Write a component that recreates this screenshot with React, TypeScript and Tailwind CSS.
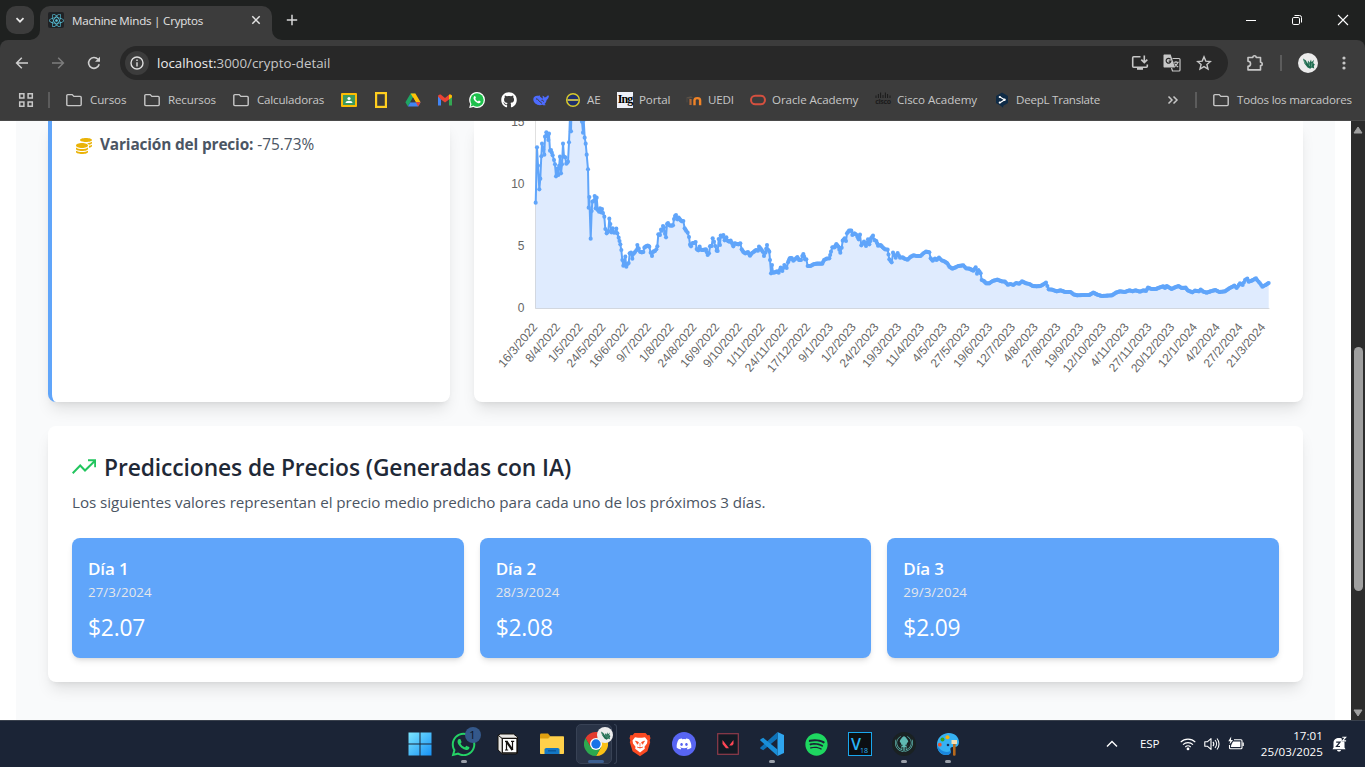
import React from "react";
import { FaCoins, FaWhatsapp, FaGithub, FaDiscord, FaSpotify, FaReact } from "react-icons/fa";
import { SiGitkraken } from "react-icons/si";

/* ---------- price history ---------- */

const SEGMENTS: { ox: number; oy: number; pts: string }[] = [
  {
    ox: 500,
    oy: 120,
    pts: "107,248 111,82 114,137 118,208 121,176 124,109 126,71 133,104 135,50 139,37 145,60 147,41 150,92 153,90 158,106 162,120 165,133 168,169 172,146 175,165 180,110 183,160 186,133 189,71 192,110 196,112 199,131 204,125 207,67 210,-10 213,34 215,-60 240,-60 243,-10 246,5 249,38 251,0 254,53 257,71 260,104 264,148 266,263 268,231 272,356 275,273 277,245 281,243 284,228 287,265 290,233 293,270 297,275 300,265 303,277 306,267 309,279 313,290 316,327 320,340 325,333 328,296 331,312 334,337 338,325 342,338 346,337 349,326 352,340 356,353 361,373 364,390 367,420 370,437 373,430 376,410 379,440 383,432 386,429 389,400 393,398 397,416 400,402 405,396 409,391 412,375 416,385 420,395 425,397 430,396 433,383 438,379 443,377 448,380 452,398 456,408 460,395 465,393 469,388 472,379 475,343 480,345 483,329 486,332 489,318 492,322 495,341 498,352 501,312 504,309 508,316 514,317 519,316 522,297 525,288 528,285 532,298 536,293 541,300 546,304 550,303 554,325 559,333 563,338 567,351 570,374 573,379 577,370 582,369 587,366 590,387 595,391 599,380 603,389 608,390 614,389 618,388 623,405 627,400 630,379 635,378 638,355 642,365 646,378 650,392 653,393 656,357 660,375 662,347 666,350 670,345 674,361 679,352 683,362 688,365 692,362 697,372 700,379 704,370 710,372 716,373 721,370 725,388 730,396 736,400 744,396 749,405",
  },
  {
    ox: 750,
    oy: 210,
    pts: "0,137 5,130 12,125 18,120 24,122 27,110 33,117 38,125 42,138 46,128 51,105 55,120 58,125 60,150 63,190 66,165 69,188 75,187 81,184 86,188 92,173 97,183 103,165 110,174 114,157 119,145 125,144 130,152 136,147 142,141 147,150 153,150 157,138 160,132 165,148 169,148 173,168 182,168 190,163 200,161 210,161 217,161 222,150 230,146 238,145 243,125 247,112 254,112 259,102 265,110 271,128 275,113 278,92 284,85 288,93 291,70 297,62 304,62 307,75 313,70 320,75 326,88 330,74 334,106 342,95 348,108 354,88 358,103 363,85 369,77 373,90 379,93 384,107 392,105 398,112 405,118 413,119 418,148 425,157 429,128 437,143 443,129 450,143 458,142 465,147 473,149 480,142 490,136 500,138 512,138 520,130 528,125 538,127 542,145 548,152 555,146 560,150 567,143 575,151 583,154 592,160 598,170 607,176 615,173 625,168 640,166 648,175 658,176 670,182 677,172 681,191 685,180 692,190 695,210 702,213 708,220 718,220 728,213 742,209 755,214 765,215 773,224 782,222 790,225 798,219 808,221",
  },
  {
    ox: 1010,
    oy: 230,
    pts: "36,154 48,160 58,162 68,168 80,169 92,168 100,163 108,158 112,168 116,178 126,179 140,184 152,181 165,186 182,186 190,193 202,196 220,195 238,195 250,188 262,194 275,198 290,197 306,196 318,188 330,184 345,186 358,181 368,184 376,181 390,185 400,181 408,183 414,173 424,177 438,177 450,172 460,169 465,174 470,168 485,177 495,172 505,168 515,174 527,173 533,181 547,187 555,182 567,184 572,179 580,185 590,188 602,184 616,180 628,186 645,184 658,175 673,167 680,174 690,160 698,165 705,150 712,146 716,155 725,152 738,145 742,151 750,160 757,170 767,165 776,159",
  },
];

const CHART_X = 474;
const CHART_Y = 121;

const keyPoints: [number, number][] = SEGMENTS.flatMap((s) =>
  s.pts.split(" ").map((p): [number, number] => {
    const [x, y] = p.split(",").map(Number);
    return [s.ox + x / 3 - CHART_X, s.oy + y / 3 - CHART_Y];
  }),
);

const markers: [number, number][] = [];
keyPoints.forEach((p, i) => {
  markers.push(p);
  const n = keyPoints[i + 1];
  if (!n) return;
  const steps = Math.round((n[0] - p[0]) / 1.1);
  for (let k = 1; k < steps; k++) {
    const t = k / steps;
    markers.push([p[0] + (n[0] - p[0]) * t, p[1] + (n[1] - p[1]) * t]);
  }
});

const linePath = keyPoints.map((p, i) => `${i ? "L" : "M"}${p[0].toFixed(1)} ${p[1].toFixed(1)}`).join("");
const last = keyPoints[keyPoints.length - 1];
const areaPath = `${linePath}L${last[0].toFixed(1)} 187.5L61.5 187.5Z`;

const DATES =
  "16/3/2022 8/4/2022 1/5/2022 24/5/2022 16/6/2022 9/7/2022 1/8/2022 24/8/2022 16/9/2022 9/10/2022 1/11/2022 24/11/2022 17/12/2022 9/1/2023 1/2/2023 24/2/2023 19/3/2023 11/4/2023 4/5/2023 27/5/2023 19/6/2023 12/7/2023 4/8/2023 27/8/2023 19/9/2023 12/10/2023 4/11/2023 27/11/2023 20/12/2023 12/1/2024 4/2/2024 27/2/2024 21/3/2024".split(
    " ",
  );

function PriceChart() {
  return (
    <svg width="829" height="281" viewBox="0 0 829 281" className="block overflow-hidden">
      <path d={areaPath} fill="#dfebfe" />
      <path d="M61.5 0V187.5H795.5" fill="none" stroke="#000" strokeOpacity="0.12" />
      <path d={linePath} fill="none" stroke="#60a5fa" strokeWidth="2" strokeLinejoin="round" />
      {markers.map(([x, y], i) => (
        <circle key={i} cx={x} cy={y} r="2.05" fill="#60a5fa" />
      ))}
      <g fontFamily="Liberation Sans, Arial, sans-serif" fontSize="12" fill="#666">
        {[15, 10, 5, 0].map((v, i) => (
          <text key={v} x="50.5" y={5 + i * 62} textAnchor="end">
            {v}
          </text>
        ))}
        {DATES.map((d, i) => (
          <text
            key={d}
            textAnchor="end"
            transform={`translate(${(64 + i * 22.75).toFixed(2)} 206.3) rotate(-50)`}
          >
            {d}
          </text>
        ))}
      </g>
    </svg>
  );
}

/* ---------- small icons ---------- */

type SvgProps = { size?: number; box?: string; className?: string; children: React.ReactNode };
function Svg({ size = 16, box = "0 0 16 16", className = "", children }: SvgProps) {
  return (
    <svg width={size} height={size} viewBox={box} className={`shrink-0 ${className}`} fill="none">
      {children}
    </svg>
  );
}

const Folder = () => (
  <Svg>
    <path d="M.8 3.600c0-.6.4-1 1-1h4.400l1.700 1.800h6.300c.6 0 1 .4 1 1v7.200c0 .6-.4 1-1 1H1.800c-.6 0-1-.4-1-1z" stroke="#c7c7c7" strokeWidth="1.400" />
  </Svg>
);

const Dragon = ({ size = 20 }: { size?: number }) => (
  <Svg size={size} box="0 0 20 20">
    <circle cx="10" cy="10" r="10" fill="#ececec" />
    <path d="M5 5.500l3 2 1.600 3.200.4-3.200 1.600 2.200L13 6.500l.6 2.800 2.400-2.500-.8 3.200 1.600 1.400-1 1.600.4 2.400-2.400-1-1.600 1.400-2.600-1.200-1.600-2.200-1.600-2z" fill="#1e6b4f" />
    <path d="M5.500 7l2 3.600M10.800 9.500l.8 3.500M14 10l-.6 3.600" stroke="#7fb39f" strokeWidth=".7" />
  </Svg>
);

const Drive = () => (
  <Svg>
    <path d="M5.600 1.400h4.800L5.200 10.400 2.900 14.400.4 10.200z" fill="#1fa463" />
    <path d="M5.600 1.400h4.800l5.200 8.900h-4.800z" fill="#ffc107" />
    <path d="M5.400 10.200h10.200l-2.500 4.300H2.900z" fill="#4285f4" />
    <path d="M10.800 10.200h4.800l-2.500 4.300z" fill="#ea4335" />
    <path d="M8 5.600l2.700 4.600H5.300z" fill="#3c3c3c" />
  </Svg>
);

const Gmail = () => (
  <Svg>
    <path d="M1 4v9.400h3V7.200z" fill="#4285f4" />
    <path d="M15 4v9.400h-3V7.200z" fill="#34a853" />
    <path d="M1 4.600C1 2.800 3 2 4.300 3L8 5.900 11.700 3C13 2 15 2.800 15 4.600L12 7.600 8 10.500 4 7.600z" fill="#ea4335" />
    <path d="M12 3v4.600l3-2.400v-.8C15 2.700 13.200 2 12 3z" fill="#fbbc04" />
  </Svg>
);

const WhatsBadge = () => (
  <Svg>
    <path d="M8 0a8 8 0 0 1 0 16 8 8 0 0 1-3.600-.9L.2 16l1-4A8 8 0 0 1 8 0z" fill="#fff" />
    <circle cx="8" cy="8" r="6.700" fill="#1ec04c" />
    <path d="M3 11l1.600 2.600-3 .8z" fill="#1ec04c" />
    <path d="M5.300 4.300c.6-.4 1-.2 1.200.4l.4 1.100c.1.400-.5.800-.6 1.100.6 1.200 1.500 2 2.700 2.500.4-.2.700-.8 1-.8l1.400.7c.5.300.1 1.400-.6 1.800-1.900.9-6.400-2.500-6.300-5.200 0-.7.400-1.300.8-1.600z" fill="#fff" />
  </Svg>
);

const Whale = () => (
  <Svg>
    <path d="M.3 7.300C.3 4.800 2.400 3.600 4.600 3.800c.8.100 1.400-.4 2.200-.3.500.1.300.6.100 1 .9.500 1.800 1.300 2.600 2.200.5-.8.300-1.700-.2-2.900 1.200.2 2 .8 2.300 1.700 1.200-.1 2.200-.8 2.700-2 .5.300 1 .3 1.700.1-.1 2.400-1.100 3.700-2.400 4.300-.2 1.800-.9 3.100-2.100 4.200l1.300 1c-1.300.4-2.500.2-3.400-.3C4.700 14.300.3 11.200.3 7.300z" fill="#4d6bfe" />
    <path d="M3 6.800c2.500 0 3.400 3.400 6 4.600M8.500 8.300c1-.4 1.900.2 2 1.300" stroke="#3c3c3c" strokeWidth="1" />
  </Svg>
);

const Chrome = () => (
  <Svg size={24} box="0 0 24 24">
    <path d="M12 6h10.400A12 12 0 0 1 12 24l5.200-9z" fill="#fbc116" />
    <path d="M12 24A12 12 0 0 1 1.600 6l5.200 9 5.200 3 5.200-3z" fill="#2da94f" />
    <path d="M1.600 6a12 12 0 0 1 20.800 0H12l-5.200 9z" fill="#e33b2e" />
    <circle cx="12" cy="12" r="6" fill="#fff" />
    <circle cx="12" cy="12" r="4.700" fill="#1a73e8" />
  </Svg>
);

/* ---------- browser chrome ---------- */

function TabStrip() {
  return (
    <div className="flex h-10 shrink-0 bg-[#1f2120] text-[#e3e3e3]">
      <div className="ml-1.5 mt-1.5 flex size-7 items-center justify-center rounded-[10px] bg-[#3c3c3c]">
        <Svg size={12} box="0 0 12 12">
          <path d="M2.500 4.200L6 7.700l3.500-3.500" stroke="#e8e8e8" strokeWidth="1.700" />
        </Svg>
      </div>
      <svg width="10" height="10" className="-ml-1 self-end" viewBox="0 0 10 10">
        <path d="M10 0v10H0A10 10 0 0 0 10 0z" fill="#3c3c3c" />
      </svg>
      <div className="mt-1.5 flex w-[232px] items-center rounded-t-[10px] bg-[#3c3c3c] pb-1.5 pl-2">
        <div className="flex size-4 items-center justify-center rounded-[2px] bg-[#202225]">
          <FaReact size={15} color="#58c4dc" />
        </div>
        <span className="ml-2 w-[176px] whitespace-nowrap pt-px text-[11.6px] leading-4 tracking-[-0.22px]">Machine Minds | Cryptos</span>
        <Svg size={12} box="0 0 12 12" className="ml-0.5">
          <path d="M2.300 2.300l7.400 7.400M9.700 2.300L2.300 9.700" stroke="#e3e3e3" strokeWidth="1.500" />
        </Svg>
      </div>
      <svg width="10" height="10" className="self-end" viewBox="0 0 10 10">
        <path d="M0 0v10h10A10 10 0 0 1 0 0z" fill="#3c3c3c" />
      </svg>
      <Svg size={12} box="0 0 12 12" className="ml-1 mt-3.5">
        <path d="M6 .8v10.400M.8 6h10.400" stroke="#d8d8d8" strokeWidth="1.500" />
      </Svg>
      <div className="ml-auto flex h-10 items-center">
        <div className="flex w-[46px] justify-center">
          <div className="mt-px h-px w-2.5 bg-white" />
        </div>
        <div className="flex w-[46px] justify-center">
          <Svg size={12} box="0 0 12 12">
            <rect x="1.500" y="3.500" width="7" height="7" rx="1.300" stroke="#fff" />
            <path d="M3.500 1.500h5a2 2 0 0 1 2 2v5" stroke="#fff" />
          </Svg>
        </div>
        <div className="flex w-[45px] justify-center">
          <Svg size={12} box="0 0 12 12">
            <path d="M1 1l10 10M11 1L1 11" stroke="#fff" strokeWidth="1.100" />
          </Svg>
        </div>
      </div>
    </div>
  );
}

function Toolbar() {
  return (
    <div className="bg-[#1f2120]">
      <div className="flex h-[46px] items-center rounded-t-lg bg-[#3c3c3c]">
        <Svg className="ml-3.5">
          <path d="M14 8H2.800M7.800 2.800L2.600 8l5.200 5.200" stroke="#cfcfcf" strokeWidth="1.500" />
        </Svg>
        <Svg className="ml-5">
          <path d="M2 8h11.200M8.200 2.800L13.400 8l-5.200 5.200" stroke="#7d7d7d" strokeWidth="1.500" />
        </Svg>
        <Svg className="ml-5">
          <path d="M13.200 9.300A5.400 5.400 0 1 1 12 4.300" stroke="#cfcfcf" strokeWidth="1.600" />
          <path d="M14 1.800v5H9z" fill="#cfcfcf" />
        </Svg>
        <div className="ml-[18px] flex h-[34px] w-[1108px] items-center rounded-full bg-[#282828] pl-[5px]">
          <div className="flex size-6 items-center justify-center rounded-full bg-[#3c3c3c]">
            <Svg size={14} box="0 0 14 14">
              <circle cx="7" cy="7" r="6" stroke="#dedede" strokeWidth="1.400" />
              <path d="M7 6.200v4.200M7 3.500v1.500" stroke="#dedede" strokeWidth="1.400" />
            </Svg>
          </div>
          <span className="ml-2 text-[13.3px] leading-5 tracking-[0.03px] text-[#c7c7c7]">
            <span className="text-[#ececec]">localhost:</span>3000/crypto-detail
          </span>
          <div className="ml-auto flex items-center gap-[15px] pr-4">
            <Svg size={18} box="0 0 18 18" className="-mr-px">
              <path d="M9.500 2.800H2.700c-.6 0-1 .4-1 1v8.400c0 .6.4 1 1 1h12.600c.6 0 1-.4 1-1v-1.700" stroke="#c7c7c7" strokeWidth="1.600" />
              <path d="M6 13.500h6v2.300H6z" fill="#c7c7c7" />
              <path d="M13.300 1.500v6.800M10.300 5.600l3 3 3-3" stroke="#c7c7c7" strokeWidth="1.600" />
            </Svg>
            <Svg size={18} box="0 0 18 18">
              <path d="M1.500.5h6.200l4.300 13H1.500c-.6 0-1-.4-1-1v-11c0-.6.4-1 1-1z" fill="#c7c7c7" />
              <path d="M7.500 5.300A2.400 2.400 0 1 0 7.900 7.200H5.700" stroke="#282828" strokeWidth="1.200" />
              <path d="M9.500 4.500h6.500c.6 0 1 .4 1 1V16c0 .6-.4 1-1 1H9.500l-1-3" stroke="#c7c7c7" strokeWidth="1.200" />
              <path d="M10.500 8.200h5.300M13 7v1.200M15 8.200c-.6 2-2 3.500-3.500 4.500M11.500 9.500c.8 1.500 2 2.500 3.700 3.500" stroke="#c7c7c7" strokeWidth="1.100" />
            </Svg>
            <Svg size={16}>
              <path d="M8 1.900l1.800 4.200 4.600.4-3.500 3 1.100 4.500L8 11.600 4 14l1.100-4.500-3.500-3 4.600-.4z" stroke="#c7c7c7" strokeWidth="1.400" />
            </Svg>
          </div>
        </div>
        <Svg size={18} box="0 0 18 18" className="ml-[18px]">
          <path d="M2 3.500h4.800a1.700 1.700 0 0 1 3.400 0h4.300v4.700a1.700 1.700 0 0 1 0 3.400v4.300H2v-3.600a2.500 2.500 0 0 0 0-5.100z" stroke="#c7c7c7" strokeWidth="1.600" strokeLinejoin="round" />
        </Svg>
        <div className="ml-4 h-4 w-0.5 bg-[#5c5c5c]" />
        <div className="ml-4">
          <Dragon />
        </div>
        <Svg className="ml-[18px]">
          <circle cx="8" cy="3" r="1.600" fill="#c7c7c7" />
          <circle cx="8" cy="8" r="1.600" fill="#c7c7c7" />
          <circle cx="8" cy="13" r="1.600" fill="#c7c7c7" />
        </Svg>
      </div>
    </div>
  );
}

function Mark({ w, icon, label, gap = "gap-1.5", t = "" }: { w: string; icon: React.ReactNode; label?: string; gap?: string; t?: string }) {
  return (
    <div className={`flex shrink-0 items-center whitespace-nowrap ${gap} ${w}`}>
      <div className="flex size-4 shrink-0 items-center justify-center">{icon}</div>
      {label && <span className={t}>{label}</span>}
    </div>
  );
}

function Bookmarks() {
  return (
    <div className="flex h-[35px] shrink-0 items-center border-b border-[#4a4a4a] bg-[#3c3c3c] pb-1.5 pl-[18px] text-[11.6px] leading-4 tracking-[-0.15px] text-[#c7c7c7]">
      <Svg>
        <path d="M1.700 1.700h4.200v4.200H1.700zM10.100 1.700h4.200v4.200h-4.200zM1.700 10.100h4.200v4.200H1.700zM10.100 10.100h4.200v4.200h-4.200z" stroke="#c7c7c7" strokeWidth="1.500" />
      </Svg>
      <div className="ml-3.5 mr-4 h-4 w-0.5 bg-[#5c5c5c]" />
      <Mark w="w-[78px]" gap="gap-2" icon={<Folder />} label="Cursos" />
      <Mark w="w-[89px]" gap="gap-2" icon={<Folder />} label="Recursos" />
      <Mark w="w-[108px]" gap="gap-2" icon={<Folder />} label="Calculadoras" t="tracking-[-0.2px]" />
      <Mark
        w="w-8"
        icon={
          <Svg>
            <rect y="1" width="16" height="14" rx="1" fill="#fbbc04" />
            <rect x="2" y="3" width="12" height="10" fill="#3d9a5e" />
            <circle cx="8" cy="6.500" r="1.600" fill="#fff" />
            <path d="M4.500 11c0-3 7-3 7 0z" fill="#fff" />
          </Svg>
        }
      />
      <Mark
        w="w-8"
        icon={
          <Svg>
            <rect x="3.100" y="1.100" width="9.800" height="13.800" stroke="#ffce1f" strokeWidth="2.200" />
          </Svg>
        }
      />
      <Mark w="w-8" icon={<Drive />} />
      <Mark w="w-8" icon={<Gmail />} />
      <Mark w="w-8" icon={<WhatsBadge />} />
      <Mark w="w-8" icon={<FaGithub size={16} color="#fff" />} />
      <Mark w="w-8" icon={<Whale />} />
      <Mark
        w="w-[52px]"
        label="AE"
        icon={
          <Svg>
            <circle cx="8" cy="8" r="6.300" fill="#1f2f6b" stroke="#d8ca2b" strokeWidth="1.500" />
            <path d="M2.500 8h11" stroke="#e0d34f" strokeWidth="1.600" />
          </Svg>
        }
      />
      <Mark
        w="w-[69px]"
        label="Portal"
        icon={
          <div className="flex h-4 w-4 justify-center bg-[#eef0f8] font-['Liberation_Serif',serif] text-[12px] font-bold leading-[14px] tracking-[-1px] text-black">
            Ing
          </div>
        }
      />
      <Mark
        w="w-16"
        label="UEDI"
        icon={
          <Svg>
            <path d="M8.500 13.200V8.300c0-2.900 5.600-2.900 5.600 0v4.900" stroke="#f08327" strokeWidth="2.400" />
            <path d="M0 5.500l5-1.200 2 1.200-4 1.200z" fill="#5a5148" />
            <path d="M1 6v4.500" stroke="#5a5148" strokeWidth=".7" />
            <path d="M4.500 7v6" stroke="#b86a35" strokeWidth="2.200" />
          </Svg>
        }
      />
      <Mark
        w="w-[125px]"
        label="Oracle Academy"
        t="tracking-[-0.1px]"
        icon={
          <Svg>
            <rect x="1" y="3.700" width="14" height="8.600" rx="4.300" stroke="#d5503f" strokeWidth="2" />
          </Svg>
        }
      />
      <Mark
        w="w-[119px]"
        label="Cisco Academy"
        t="tracking-[-0.05px]"
        icon={
          <div className="-mt-1 flex flex-col items-center">
            <svg width="16" height="7" viewBox="0 0 16 7">
              <path d="M1 3.500V6M3.400 2v4M5.600.5V6M8 3v3M10.400.5V6M12.600 2v4M15 3.500V6" stroke="#1b1b1b" strokeWidth="1" />
            </svg>
            <span className="text-[7px] font-bold leading-[6px] tracking-[-0.3px] text-[#1b1b1b]">cisco</span>
          </div>
        }
      />
      <Mark
        w="w-[170px]"
        label="DeepL Translate"
        t="tracking-[-0.26px]"
        icon={
          <Svg>
            <path d="M8 .5l6 3.400v7.200l-4.700 2.700-.3 1.900-2-1.600-5-3V3.900z" fill="#0f2b46" />
            <path d="M6 5l4.600 2.700L6 10.700" stroke="#fff" strokeWidth="1.200" />
            <circle cx="5.800" cy="5" r="1.100" fill="#fff" />
            <circle cx="10.500" cy="7.800" r="1.200" fill="#fff" />
            <circle cx="5.800" cy="10.600" r="1.100" fill="#fff" />
          </Svg>
        }
      />
      <Svg className="ml-px">
        <path d="M3.500 4.500L7 8l-3.500 3.500M8.500 4.500L12 8l-3.500 3.500" stroke="#c7c7c7" strokeWidth="1.500" />
      </Svg>
      <div className="ml-3.5 mr-4 h-4 w-0.5 bg-[#5c5c5c]" />
      <Mark w="w-[150px]" gap="gap-2" icon={<Folder />} label="Todos los marcadores" t="tracking-[-0.22px]" />
    </div>
  );
}

/* ---------- page ---------- */

const DAYS = [
  { name: "Día 1", date: "27/3/2024", price: "$2.07" },
  { name: "Día 2", date: "28/3/2024", price: "$2.08" },
  { name: "Día 3", date: "29/3/2024", price: "$2.09" },
];

function Page() {
  return (
    <main className="h-full flex-1 overflow-hidden bg-white px-4">
      <div className="flex h-full flex-col gap-6 bg-gray-50 px-8">
        <div className="grid h-[281px] shrink-0 grid-cols-3 gap-6">
          <section className="rounded-b-lg border-l-4 border-[#60a5fa] bg-white pl-6 pt-3 shadow-lg">
            <p className="flex items-center gap-2 text-[15.4px] leading-6 text-[#4b5563]">
              <FaCoins size={16} color="#eab308" className="mt-0.5" />
              <span>
                <b className="font-bold tracking-[-0.15px]">Variación del precio:</b> -75.73%
              </span>
            </p>
          </section>
          <section className="col-span-2 rounded-b-lg bg-white shadow-lg">
            <PriceChart />
          </section>
        </div>
        <section className="h-64 shrink-0 rounded-lg bg-white p-6 shadow-lg">
          <h2 className="mb-2 flex h-8 items-center gap-2 text-[22.8px] font-semibold leading-8 tracking-[-0.09px] text-[#1f2937]">
            <Svg size={24} box="0 0 24 24">
              <path d="M.7 19.200L8.200 11.500l4.800 5L23 6.700M16 6.200h7.200v7" stroke="#22c55e" strokeWidth="2" />
            </Svg>
            <span className="whitespace-nowrap pt-1">Predicciones de Precios (Generadas con IA)</span>
          </h2>
          <p className="mb-6 text-[15.2px] leading-6 tracking-[-0.04px] text-[#4b5563]">
            Los siguientes valores representan el precio medio predicho para cada uno de los próximos 3 días.
          </p>
          <div className="grid grid-cols-3 gap-4">
            {DAYS.map((d) => (
              <article key={d.name} className="h-[120px] rounded-lg bg-[#60a5fa] p-4 text-white shadow-md">
                <h3 className="h-7 pt-px text-[17px] font-semibold leading-7 tracking-[-0.15px]">{d.name}</h3>
                <p className="text-[13.3px] leading-5 tracking-[0.08px] text-[#e5e7eb]">{d.date}</p>
                <p className="mt-2 pt-0.5 text-[22.8px] leading-8 tracking-[-0.2px]">{d.price}</p>
              </article>
            ))}
          </div>
        </section>
      </div>
    </main>
  );
}

function Scrollbar() {
  return (
    <div className="flex h-full w-3.5 shrink-0 flex-col items-center bg-[#2c2c2c] pt-[5px]">
      <svg width="10" height="8" viewBox="0 0 10 8">
        <path d="M5 1l4 6H1z" fill="#9f9f9f" stroke="#9f9f9f" strokeLinejoin="round" />
      </svg>
      <div className="mt-[213px] h-[244px] w-[9px] rounded-full bg-[#9f9f9f]" />
      <svg width="10" height="8" viewBox="0 0 10 8" className="mt-[118px]">
        <path d="M5 7L1 1h8z" fill="#9f9f9f" stroke="#9f9f9f" strokeLinejoin="round" />
      </svg>
    </div>
  );
}

/* ---------- taskbar ---------- */

function TaskIcon({ children, open = false }: { children: React.ReactNode; open?: boolean }) {
  return (
    <div className="relative flex h-full w-11 items-center justify-center">
      {children}
      {open && <div className="absolute bottom-1 h-[3px] w-1.5 rounded-full bg-[#9aa0aa]" />}
    </div>
  );
}

function Taskbar() {
  return (
    <div className="flex h-[47px] shrink-0 items-center border-t border-[#3a414d] bg-[#1b2436] pl-[397.5px] text-white">
      <TaskIcon>
        <Svg size={24} box="0 0 24 24">
          <defs>
            <linearGradient id="win" gradientUnits="userSpaceOnUse" x1="0" y1="0" x2="24" y2="24">
              <stop offset="0" stopColor="#7fe8ff" />
              <stop offset="1" stopColor="#1590f5" />
            </linearGradient>
          </defs>
          <path d="M.5.5h11v11H.5zM12.500.5h11v11h-11zM.5 12.500h11v11H.5zM12.500 12.500h11v11h-11z" fill="url(#win)" />
        </Svg>
      </TaskIcon>
      <TaskIcon open>
        <FaWhatsapp size={27} color="#25d366" />
        <div className="absolute right-[5px] top-1.5 flex size-4 items-center justify-center rounded-full bg-[#34588a] text-[11px] leading-4 text-[#0b1322]">1</div>
      </TaskIcon>
      <TaskIcon>
        <Svg size={22} box="0 0 22 22">
          <path d="M1 2.500L3.500 1h13l4 3v16l-1.500 1H5.500L1 17z" fill="#e8e6e3" stroke="#15120f" />
          <path d="M5.300 5.300H20V20H5.300z" fill="#fff" stroke="#15120f" strokeWidth="1.300" />
          <path d="M1.200 2.300l4 3.200" stroke="#15120f" />
          <path d="M9.500 8.500l6 8.500" stroke="#15120f" strokeWidth="2.200" />
          <path d="M9.500 17V8.500M15.500 17V8.500M8 8.300h2.500M14 8.300h3.200M8 17h3.200" stroke="#15120f" strokeWidth="1.200" />
        </Svg>
      </TaskIcon>
      <TaskIcon>
        <Svg size={26} box="0 0 26 26">
          <path d="M1 4c0-.8.500-1.500 1.300-1.500H9l2.500 3L9 8H1z" fill="#e0a010" />
          <path d="M1 7.500h8l2.300-2.300H24c.6 0 1 .4 1 1V22c0 .6-.4 1-1 1H2c-.6 0-1-.4-1-1z" fill="#ffd04a" />
          <path d="M5.500 23v-4.200c0-1 .8-1.800 1.800-1.800h11.400c1 0 1.800.8 1.800 1.800V23z" fill="#1377c5" />
          <path d="M9 19.800h8" stroke="#0b5496" strokeWidth="1.300" />
        </Svg>
      </TaskIcon>
      <div className="relative flex h-full w-11 items-center justify-center">
        <div className="absolute left-[40px] top-[3px] h-10 w-[3px] rounded-r-[4px] border-y border-r border-[#384255]" />
        <div className="absolute left-[2px] top-[3px] h-10 w-9 rounded-[5px] border border-[#384255] bg-[#2a3447]" />
        <div className="relative flex">
          <Chrome />
        </div>
        <div className="absolute right-[5px] top-1.5">
          <Dragon size={16} />
        </div>
        <div className="absolute bottom-1 h-[3px] w-4 rounded-full bg-[#3c5f91]" />
      </div>
      <TaskIcon>
        <svg width="22" height="25" viewBox="0 0 22 25">
          <path d="M5.500 1h11l2 2.300 2-.3 1 3.200-.8 2 .5 2-2.800 9-7.400 5-7.400-5L.8 10.200l.5-2-.8-2L1.500 3l2 .3z" fill="#fb4a22" />
          <path d="M6 5.300l3 .4h4l3-.4 2.500 3.200-.5 3-2.500 3.200.3 2L11 20.500l-4.800-3.800.3-2L4 11.500l-.5-3z" fill="#fff" />
          <path d="M6.500 9l3 1.300-1 2zM15.500 9l-3 1.300 1 2zM8 15l3 1 3-1M11 11v3.500" fill="#fb4a22" stroke="#fb4a22" strokeWidth=".7" />
        </svg>
      </TaskIcon>
      <TaskIcon>
        <div className="flex size-6 items-center justify-center rounded-full bg-[#5865f2]">
          <FaDiscord size={16} color="#fff" />
        </div>
      </TaskIcon>
      <TaskIcon>
        <Svg size={22} box="0 0 22 22">
          <rect x=".7" y=".7" width="20.600" height="20.600" fill="#121a24" stroke="#8f3b4b" strokeWidth="1.200" />
          <path d="M5.500 7v4l3.500 4.200h3zM16.500 7v4l-1.300 1.600h-3z" fill="#ff4655" />
        </Svg>
      </TaskIcon>
      <TaskIcon open>
        <Svg size={24} box="0 0 24 24">
          <path d="M17.500 0L24 3v18l-6.500 3V0z" fill="#2fa5ee" />
          <path d="M17.500 0v6.500L3.200 18.300.6 16.800c-.6-.5-.6-1 0-1.500z" fill="#0e72b8" />
          <path d="M17.500 24v-6.500L3.200 5.700.6 7.200c-.6.500-.6 1 0 1.500z" fill="#1a8fd8" />
        </Svg>
      </TaskIcon>
      <TaskIcon>
        <FaSpotify size={23} color="#1ed760" className="ml-px" />
      </TaskIcon>
      <TaskIcon>
        <div className="flex size-6 items-end justify-center border border-[#1aa7ee] bg-[#0c0f12] text-[#2ab4f5]">
          <span className="text-[16px] font-semibold leading-[22px] tracking-[-1px]">V</span>
          <span className="text-[7px] leading-[9px]">18</span>
        </div>
      </TaskIcon>
      <TaskIcon open>
        <div className="flex size-6 items-center justify-center rounded-full bg-[#1a2122]">
          <SiGitkraken size={18} color="#5fb8b2" />
        </div>
      </TaskIcon>
      <TaskIcon open>
        <Svg size={24} box="0 0 24 24">
          <path d="M12 1c6-.5 11 3.500 11 9 0 4-2.500 5.500-5.500 5-2.500-.3-3.500 1-3 3 .8 3-1 5-4.500 5C4.500 23 1 18.500 1 12.500 1 6.500 5.500 1.500 12 1z" fill="#36b1f2" />
          <path d="M1 13c.3 5.500 4 10 9.500 10 3 0 4.800-1.500 4.200-4.500-1 1.500-4 2-7.200.8C4.500 18 2.500 16 1 13z" fill="#1a86dc" />
          <circle cx="6.500" cy="7.500" r="2" fill="#36a51c" />
          <circle cx="11.500" cy="5.200" r="2" fill="#f6b40b" />
          <circle cx="3.800" cy="12.700" r="1.900" fill="#f0502b" />
          <circle cx="12" cy="13" r="1.300" fill="#15315e" />
          <path d="M15.500 8h5.500v4h-5.500z" fill="#f3dfb5" />
          <path d="M17 12h2.600v11c0 1-2.600 1-2.600 0z" fill="#b8691c" />
        </Svg>
      </TaskIcon>
      <div className="ml-auto flex items-center">
        <Svg size={12} box="0 0 12 12">
          <path d="M1 8.500l5-5 5 5" stroke="#fff" strokeWidth="1.400" />
        </Svg>
        <span className="w-[62px] pl-[22px] text-[11.6px] leading-4 tracking-[-0.15px]">ESP</span>
        <Svg>
          <path d="M.7 6.200a10.300 10.300 0 0 1 14.600 0M3 8.700a7.100 7.100 0 0 1 10 0M5.300 11a3.900 3.900 0 0 1 5.400 0" stroke="#fff" strokeWidth="1.100" />
          <circle cx="8" cy="12.900" r="1.400" fill="#fff" />
        </Svg>
        <Svg className="ml-2">
          <path d="M.8 5.800h2.500L7 2.600v10.800L3.300 10.200H.8z" stroke="#fff" strokeWidth="1.100" strokeLinejoin="round" />
          <path d="M9 5.800c1 1.300 1 3.100 0 4.400M11 4c2 2.300 2 5.700 0 8M13 2.500c2.700 3.200 2.700 7.800 0 11" stroke="#fff" strokeWidth="1.100" />
        </Svg>
        <Svg className="ml-2">
          <path d="M6 3.700h7c.6 0 1 .4 1 1v7c0 .6-.4 1-1 1H2.500c-.6 0-1-.4-1-1V9" stroke="#fff" strokeWidth="1.100" />
          <path d="M5 5.500h7.300v5.600H3V9.500z" fill="#fff" />
          <path d="M14.500 6.500h1.300v3.400h-1.300z" fill="#fff" />
          <path d="M3.200.5L.3 5.300h2L1.500 8.500 5 4H3z" fill="#fff" />
        </Svg>
        <div className="ml-2 w-[71px] whitespace-nowrap text-right text-[11.6px] leading-4 tracking-[0.06px]">
          <div>17:01</div>
          <div>25/03/2025</div>
        </div>
        <Svg className="ml-2 mr-[18px]">
          <path d="M2.500 11.500V7C2.500 3.800 4.800 2 8 2c3.200 0 5.500 1.800 5.500 5v4.500l1 1.800h-13zM6 14h4c-.4 2-3.600 2-4 0z" fill="#fff" />
          <path d="M5.200 6.200H9l-3.500 4.300H9" stroke="#1b2436" strokeWidth="1.200" />
          <path d="M10.800.5H16v5h-5.200z" fill="#1b2436" />
          <path d="M11.300 1.200h3.400l-3.200 3.700h3.600" stroke="#fff" strokeWidth="1.100" />
        </Svg>
      </div>
    </div>
  );
}

export default function App() {
  return (
    <div className="flex h-[767px] w-[1365px] flex-col overflow-hidden font-['Open_Sans','Noto_Sans',sans-serif]">
      <TabStrip />
      <Toolbar />
      <Bookmarks />
      <div className="flex min-h-0 flex-1">
        <Page />
        <Scrollbar />
      </div>
      <Taskbar />
    </div>
  );
}
